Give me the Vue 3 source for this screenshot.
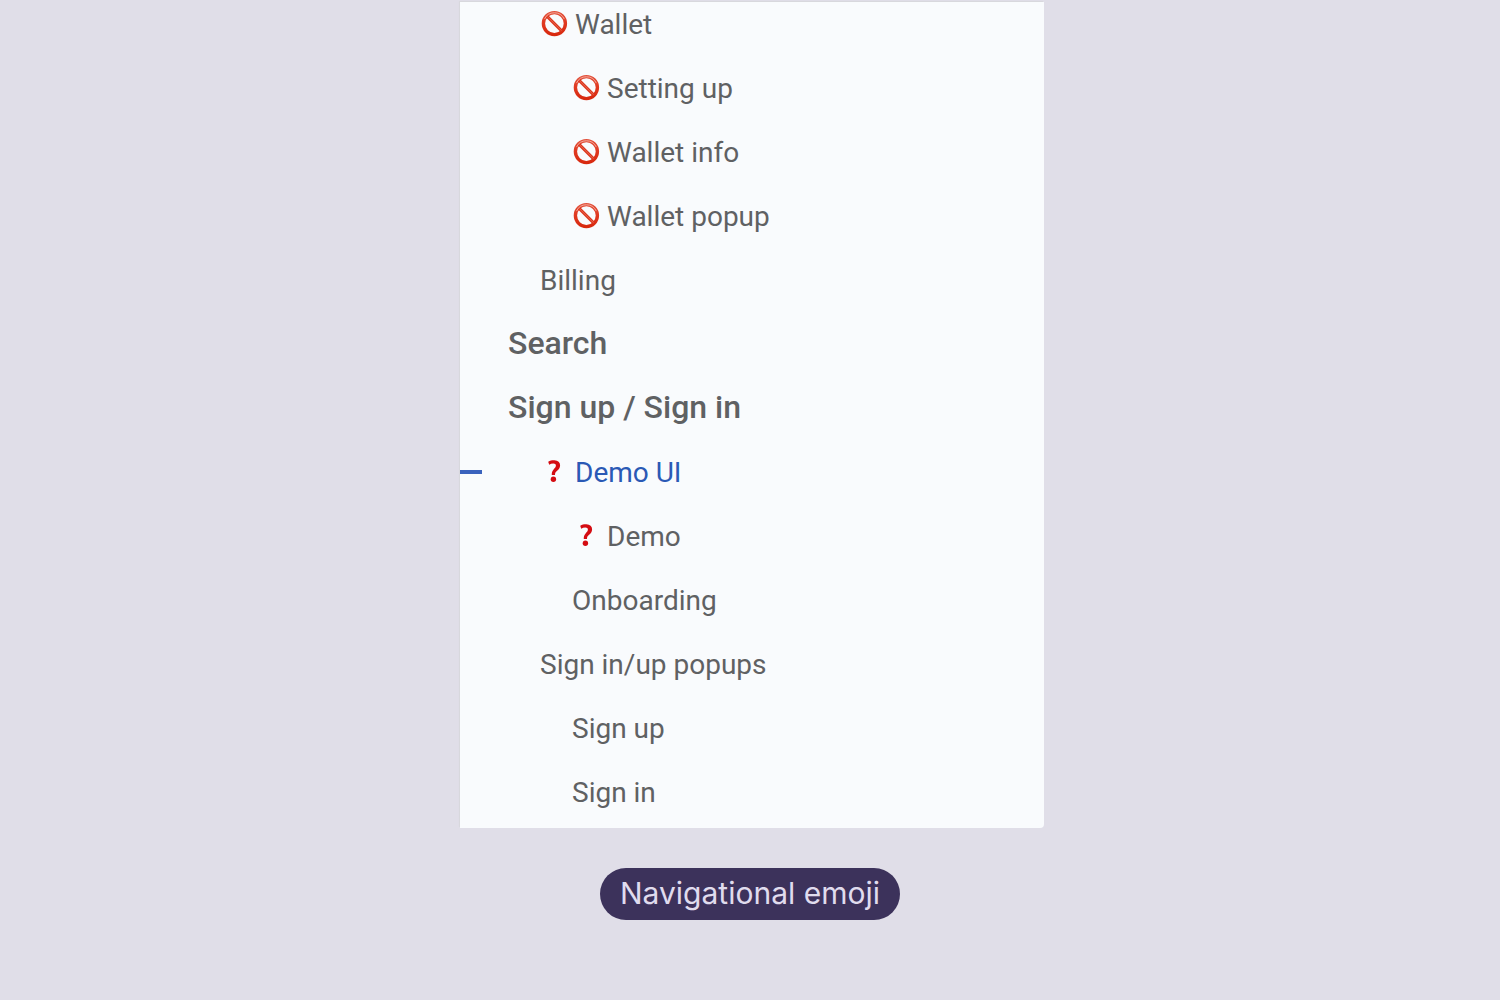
<script setup>
const items = [
  { label: 'Wallet', level: 2, icon: 'blocked' },
  { label: 'Setting up', level: 3, icon: 'blocked' },
  { label: 'Wallet info', level: 3, icon: 'blocked' },
  { label: 'Wallet popup', level: 3, icon: 'blocked' },
  { label: 'Billing', level: 2 },
  { label: 'Search', level: 1 },
  { label: 'Sign up / Sign in', level: 1 },
  { label: 'Demo UI', level: 2, icon: 'question', active: true },
  { label: 'Demo', level: 3, icon: 'question' },
  { label: 'Onboarding', level: 3 },
  { label: 'Sign in/up popups', level: 2 },
  { label: 'Sign up', level: 3 },
  { label: 'Sign in', level: 3 }
]
</script>

<template>
  <figure class="page">
    <nav class="outline" aria-label="Document outline">
      <svg class="defs" aria-hidden="true">
        <defs>
          <linearGradient id="ring" x1="0" y1="0" x2="0" y2="1">
            <stop offset="0" stop-color="#e2513c" />
            <stop offset="0.45" stop-color="#e03a22" />
            <stop offset="1" stop-color="#d8290f" />
          </linearGradient>
        </defs>
      </svg>
      <ul class="list">
        <li v-for="item in items" :key="item.label">
          <a href="#" :class="['row', 'level-' + item.level, { active: item.active }]">
            <svg v-if="item.icon === 'blocked'" class="icon" viewBox="0 0 28 28" aria-hidden="true">
              <circle cx="14.4" cy="13.6" r="11" fill="none" stroke="url(#ring)" stroke-width="3.4" />
              <path d="M6.9 6.1 21.9 21.1" stroke="#dc351b" stroke-width="3" />
              <path d="M7.4 6.6 21.4 20.6" stroke="#ec7460" stroke-width="0.8" />
              <path d="M4.5 9.1A10.9 10.9 0 0 1 24.3 9.1" fill="none" stroke="#f5b3a6" stroke-width="0.9" />
            </svg>
            <svg v-else-if="item.icon === 'question'" class="icon" viewBox="0 0 28 28" aria-hidden="true">
              <path d="M8.2 3.7C10.2 2.6 12.2 2.2 14.4 2.3C18.1 2.4 20.1 4.2 20.1 7.3C20.1 9.9 18.8 11.5 17.1 12.8C15.5 14.1 15 15 15 17.1H11.8C11.6 14.4 12.2 12.9 13.6 11.4C15 10 15.9 9.1 15.9 7.6C15.9 6.2 15 5.5 13.3 5.5C11.8 5.5 10.5 6 9.2 6.7Z" fill="#d40c12" />
              <circle cx="13.4" cy="21.3" r="2.7" fill="#d40c12" />
            </svg>
            <span class="label">{{ item.label }}</span>
          </a>
        </li>
      </ul>
    </nav>
    <figcaption class="caption">Navigational emoji</figcaption>
  </figure>
</template>

<style>
body {
  background: #e0dee8;
}
</style>

<style scoped>
.page {
  box-sizing: border-box;
  min-height: 100vh;
  margin: 0;
  padding: 2px 16px 80px;
  display: flex;
  flex-direction: column;
  align-items: center;
  gap: 40px;
  background: #e0dee8;
}
.outline {
  width: 100%;
  max-width: 584px;
  margin-left: 4px;
  overflow: hidden;
  background: #f9fbfd;
  border-radius: 0 0 4px 0;
  box-shadow: -1px -1px 1px #d8d7dc;
}
.defs {
  position: absolute;
  width: 0;
  height: 0;
}
.list {
  list-style: none;
  margin: -10px 0 0;
  padding: 0 0 4px;
}
.row {
  position: relative;
  display: flex;
  align-items: center;
  gap: 7px;
  height: 64px;
  color: #5f6163;
  font: 400 28px/32px Roboto, sans-serif;
  text-decoration: none;
}
.label {
  padding-top: 2px;
}
.level-1 {
  padding-left: 48px;
  font-size: 32px;
  font-weight: 500;
}
.level-1 .label {
  padding: 0 0 2px;
}
.level-2 {
  padding-left: 80px;
}
.level-3 {
  padding-left: 112px;
}
.active {
  color: #2a59b5;
}
.active::before {
  content: '';
  position: absolute;
  left: 0;
  top: 30px;
  width: 22px;
  height: 4px;
  background: #3a62bd;
}
.icon {
  width: 28px;
  height: 28px;
  flex: none;
}
.caption {
  padding: 0 20px 2px;
  border-radius: 26px;
  background: #3c325b;
  color: #e0dcee;
  font: 400 30px/50px Inter, sans-serif;
}
</style>
